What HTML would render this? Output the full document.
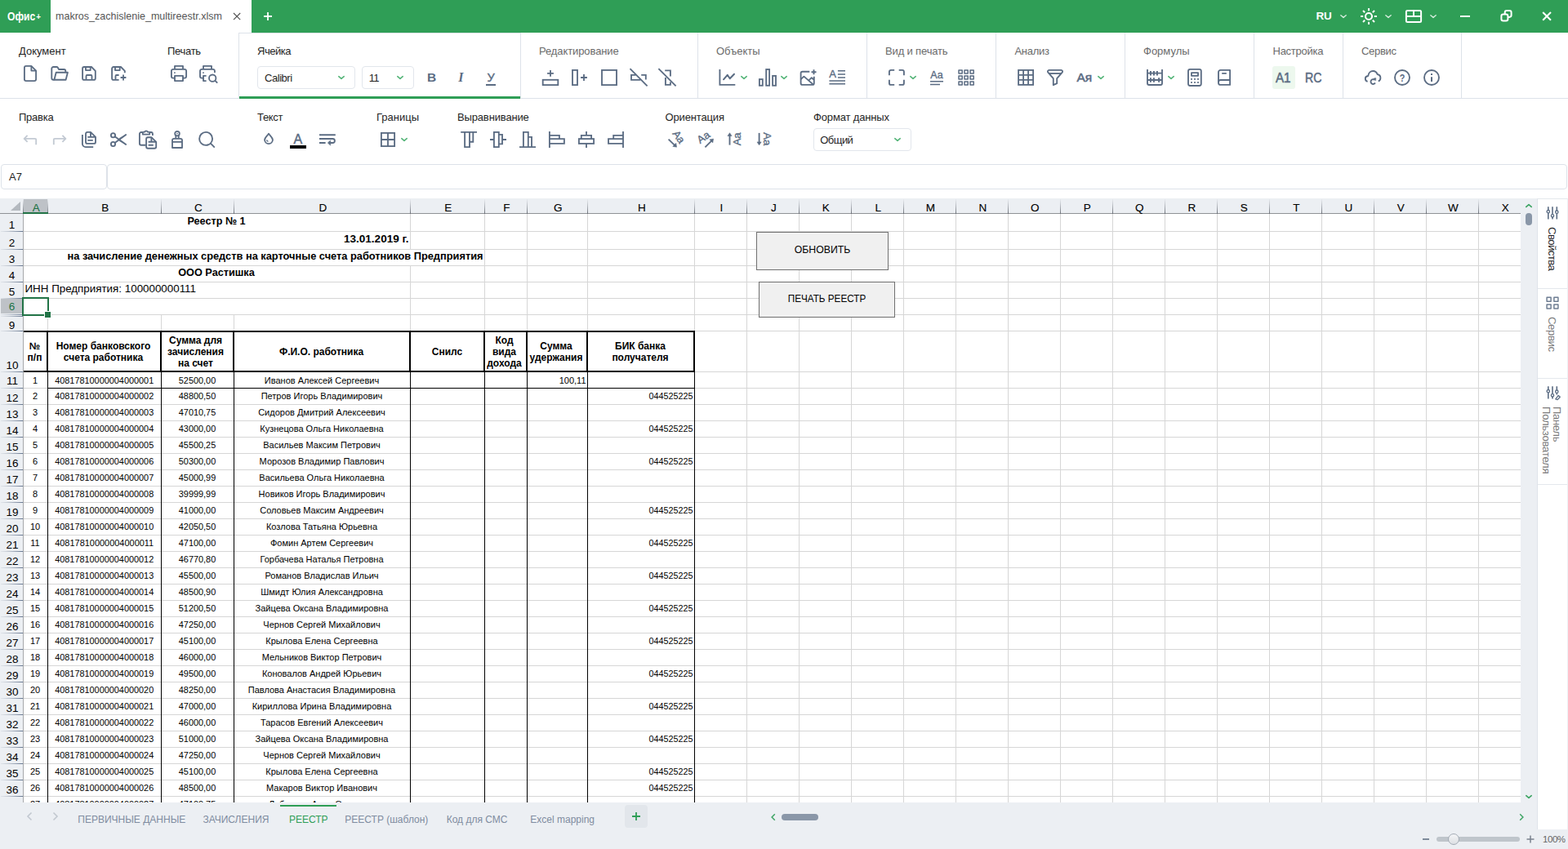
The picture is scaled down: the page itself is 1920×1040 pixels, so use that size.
<!DOCTYPE html>
<html lang="ru"><head><meta charset="utf-8"><title>makros_zachislenie_multireestr.xlsm</title>
<style>
html,body{margin:0;padding:0;}
body{width:1920px;height:1040px;overflow:hidden;background:#fff;font-family:"Liberation Sans",sans-serif;position:relative;color:#1f1f1f;}
.abs{position:absolute;}
#titlebar{position:absolute;left:0;top:0;width:1920px;height:40px;background:#2F9E56;}
#doctab{position:absolute;left:62px;top:0;width:246px;height:40px;background:#fff;}
.t{position:absolute;white-space:nowrap;line-height:16px;}
#ribbon{position:absolute;left:0;top:40px;width:1920px;height:160px;background:#fff;}
.lbl{position:absolute;white-space:nowrap;font-size:13px;line-height:16px;color:#1f1f1f;}
.lbl.g{color:#6b6b6b;}
.vdiv{position:absolute;top:40px;width:1px;height:80px;background:#DDE2E9;}
.ico{position:absolute;width:24px;height:24px;overflow:visible;fill:none;stroke:#5B6C83;stroke-width:1.85;stroke-linecap:butt;stroke-linejoin:round;}
.chev{position:absolute;width:10px;height:6px;overflow:visible;fill:none;stroke:#58B67B;stroke-width:1.7;stroke-linecap:round;stroke-linejoin:round;}
.combo{position:absolute;box-sizing:border-box;border:1px solid #E2E6EC;border-radius:4px;background:#fff;}
.btxt{position:absolute;white-space:nowrap;color:#5B6C83;font-weight:bold;line-height:20px;}
#formulabar{position:absolute;left:0;top:200px;width:1920px;height:43px;background:#fff;}
#sheet{position:absolute;left:0;top:243px;width:1862px;height:740px;background:#fff;overflow:hidden;}
#vscroll{position:absolute;left:1862px;top:243px;width:21px;height:740px;background:#ECEFF3;}
#side{position:absolute;left:1882px;top:243px;width:38px;height:773px;background:#fff;box-sizing:border-box;border-left:1px solid #DFE3EA;border-right:1px solid #EDF0F4;border-top:1px solid #E4E8ED;}
#tabs{position:absolute;left:0;top:983px;width:1882px;height:33px;background:#ECEFF3;}
#status{position:absolute;left:0;top:1016px;width:1920px;height:24px;background:#ECEFF3;}
.tab{position:absolute;top:14px;white-space:nowrap;font-size:12px;line-height:14px;color:#7F8CA0;}
svg text{font-family:"Liberation Sans",sans-serif;}
</style></head><body>

<div id="titlebar">
<div class="t" style="left:9px;top:12.25px;font-size:14.3px;line-height:16px;color:#fff;font-weight:bold;transform:scaleX(0.85);transform-origin:0 0;">Офис<span style="font-size:11.5px;position:relative;top:-0.9px;margin-left:1.2px">+</span></div>
<div id="doctab"></div>
<div class="t" style="left:68.3px;top:12.29px;font-size:13.6px;line-height:16px;color:#555;transform:scaleX(0.921);transform-origin:0 0;">makros_zachislenie_multireestr.xlsm</div>
<svg class="abs" style="left:284px;top:14px" width="12" height="12" viewBox="0 0 12 12"><path d="M2 2 L10.2 10.2 M10.2 2 L2 10.2" stroke="#555" stroke-width="1.2" fill="none"/></svg>
<svg class="abs" style="left:322px;top:14px" width="12" height="12" viewBox="0 0 12 12"><path d="M6 1 V11 M1 6 H11" stroke="#fff" stroke-width="1.8" fill="none"/></svg>
<div class="t" style="left:1611.5px;top:11.82px;font-size:13.5px;line-height:16px;color:#fff;font-weight:bold;letter-spacing:-0.3px;">RU</div>
<svg class="chev" style="left:1640px;top:17px;stroke:#D2EBDA;stroke-width:1.4;" viewBox="0 0 10 6"><path d="M1.8 1.7 L5 4.4 L8.2 1.7"/></svg>
<svg class="abs" style="left:1664px;top:8px;overflow:visible" width="24" height="24" viewBox="0 0 24 24" fill="none" stroke="#fff" stroke-width="1.7" stroke-linecap="round"><circle cx="12" cy="12" r="4" stroke-width="2.1"/><path stroke-width="2" stroke-linecap="butt" d="M12 2.1V5.2 M12 18.8V21.9 M2.1 12H5.2 M18.8 12H21.9 M5 5L7.19 7.19 M16.81 16.81L19 19 M5 19L7.19 16.81 M16.81 7.19L19 5"/></svg>
<svg class="chev" style="left:1695px;top:17px;stroke:#D2EBDA;stroke-width:1.4;" viewBox="0 0 10 6"><path d="M1.8 1.7 L5 4.4 L8.2 1.7"/></svg>
<svg class="abs" style="left:1719px;top:8px;overflow:visible" width="24" height="24" viewBox="0 0 24 24" fill="none" stroke="#fff" stroke-width="1.7" stroke-linejoin="round"><rect x="2.9" y="4.9" width="18.2" height="14.2" rx="1.5" stroke-width="2"/><path stroke-width="2" d="M2.9 12.1H21.1 M12 4.9V12.1"/></svg>
<svg class="chev" style="left:1750px;top:17px;stroke:#D2EBDA;stroke-width:1.4;" viewBox="0 0 10 6"><path d="M1.8 1.7 L5 4.4 L8.2 1.7"/></svg>
<div class="abs" style="left:1788px;top:18.7px;width:12.3px;height:2.4px;background:#fff"></div>
<svg class="abs" style="left:1832px;top:8px;overflow:visible" width="24" height="24" viewBox="0 0 24 24" fill="none" stroke="#fff" stroke-width="1.7" stroke-linejoin="round"><rect x="6.4" y="9.5" width="8" height="8" rx="2.3" stroke-width="2"/><path stroke-width="2" d="M10.7 9.5V7.4a2.3 2.3 0 0 1 2.3-2.3H16.3a2.3 2.3 0 0 1 2.3 2.3V10.6a2.3 2.3 0 0 1-2.3 2.3H14.4"/></svg>
<svg class="abs" style="left:1888px;top:14px" width="12" height="12" viewBox="0 0 12 12"><path d="M1.2 1 L11 10.8 M11 1 L1.2 10.8" stroke="#fff" stroke-width="2.1" fill="none"/></svg>
</div>
<div id="ribbon">
<div class="abs" style="left:0;top:80px;width:1920px;height:1px;background:#DDE2E9"></div>
<div class="abs" style="left:292px;top:0;width:346px;height:81px;box-sizing:border-box;border:1px solid #DDE2E9;border-bottom:none;background:#fff"></div>
<div class="abs" style="left:293px;top:78px;width:344px;height:3px;background:#2F9E56"></div>
<div class="abs" style="left:854px;top:0;width:1px;height:80px;background:#DDE2E9"></div>
<div class="abs" style="left:1061px;top:0;width:1px;height:80px;background:#DDE2E9"></div>
<div class="abs" style="left:1219px;top:0;width:1px;height:80px;background:#DDE2E9"></div>
<div class="abs" style="left:1377px;top:0;width:1px;height:80px;background:#DDE2E9"></div>
<div class="abs" style="left:1535px;top:0;width:1px;height:80px;background:#DDE2E9"></div>
<div class="abs" style="left:1644px;top:0;width:1px;height:80px;background:#DDE2E9"></div>
<div class="abs" style="left:1789px;top:0;width:1px;height:80px;background:#DDE2E9"></div>
<div class="t" style="left:23px;top:14.80px;font-size:13px;line-height:16px;color:#1f1f1f;">Документ</div>
<svg class="ico" style="left:25px;top:38px;" viewBox="0 0 24 24"><path d="M13.4 2.9H7a2.1 2.1 0 0 0-2.1 2.1V19a2.1 2.1 0 0 0 2.1 2.1H17a2.1 2.1 0 0 0 2.1-2.1V8.6Z"/><path d="M13.4 2.9V8.6H19.1"/></svg>
<svg class="ico" style="left:61px;top:38px;" viewBox="0 0 24 24"><path d="M5.6 19.7H4.3a2 2 0 0 1-2-2V6a2 2 0 0 1 2-2H8.4a1.6 1.6 0 0 1 1.4.8L11 7H17.3a2 2 0 0 1 2 2V10.7"/><path d="M7.7 10.7H21.9L19.6 19.7H5.4Z"/></svg>
<svg class="ico" style="left:97px;top:38px;" viewBox="0 0 24 24"><path d="M6 4H15L19.8 8.8V18a1.9 1.9 0 0 1-1.9 1.9H6A1.9 1.9 0 0 1 4.1 18V5.9A1.9 1.9 0 0 1 6 4Z"/><path d="M8 4V8.1H13.7V4 M8.5 19.9V15.2a1.2 1.2 0 0 1 1.2-1.2H14.3a1.2 1.2 0 0 1 1.2 1.2V19.9"/></svg>
<svg class="ico" style="left:133px;top:38px;" viewBox="0 0 24 24"><path d="M19.8 11.2V8.8L15 4H6A1.9 1.9 0 0 0 4.1 5.9V18A1.9 1.9 0 0 0 6 19.9H12.6"/><path d="M8 4V8.1H13.7V4 M8.5 19.9V15.2a1.2 1.2 0 0 1 1.2-1.2H12.6 M18 13.6V20.4 M14.6 17H21.4"/></svg>
<div class="t" style="left:205px;top:14.80px;font-size:13px;line-height:16px;color:#1f1f1f;letter-spacing:-0.3px;">Печать</div>
<svg class="ico" style="left:207px;top:38px;" viewBox="0 0 24 24"><path d="M7 6.8V2.9H17V6.8"/><path d="M7 17.6H5a2.1 2.1 0 0 1-2.1-2.1V8.9A2.1 2.1 0 0 1 5 6.8H19a2.1 2.1 0 0 1 2.1 2.1V15.5A2.1 2.1 0 0 1 19 17.6H17"/><rect x="7" y="14.9" width="10" height="6.2"/><rect x="6.1" y="10.3" width="1.6" height="1.6" fill="#5B6C83" stroke="none"/></svg>
<svg class="ico" style="left:243px;top:38px;" viewBox="0 0 24 24"><path d="M6 6.8V2.9H16V6.8"/><path d="M6 17.6H4.1A2.1 2.1 0 0 1 2 15.5V8.9A2.1 2.1 0 0 1 4.1 6.8H17.8a2.1 2.1 0 0 1 2.1 2.1V11"/><path d="M9.6 14.9H6V21.1H9.6"/><circle cx="17.2" cy="17.7" r="4.2"/><path d="M20.2 20.7L23.2 23.7"/><rect x="5.2" y="10.3" width="1.6" height="1.6" fill="#5B6C83" stroke="none"/></svg>
<div class="t" style="left:315px;top:14.80px;font-size:13px;line-height:16px;color:#1f1f1f;letter-spacing:-0.5px;">Ячейка</div>
<div class="combo" style="left:315px;top:41px;width:120px;height:28px"></div>
<div class="t" style="left:324px;top:47.60px;font-size:13px;line-height:16px;letter-spacing:-0.45px;">Calibri</div>
<svg class="chev" style="left:413px;top:51.5px;" viewBox="0 0 10 6"><path d="M1.8 1.7 L5 4.4 L8.2 1.7"/></svg>
<div class="combo" style="left:443px;top:41px;width:64px;height:28px"></div>
<div class="t" style="left:451.7px;top:47.60px;font-size:13px;line-height:16px;letter-spacing:-0.6px;">11</div>
<svg class="chev" style="left:485px;top:51.5px;" viewBox="0 0 10 6"><path d="M1.8 1.7 L5 4.4 L8.2 1.7"/></svg>
<div class="t" style="left:523px;top:47.03px;font-size:15.5px;line-height:16px;color:#5B6C83;font-weight:bold;">B</div>
<div class="t" style="left:561.2px;top:46.86px;font-size:16px;line-height:16px;color:#5B6C83;font-weight:bold;font-style:italic;font-family:'Liberation Serif',serif;">I</div>
<div class="t" style="left:596.5px;top:47.18px;font-size:14.5px;line-height:16px;color:#5B6C83;-webkit-text-stroke:0.4px #5B6C83;">У</div>
<div class="abs" style="left:595px;top:63px;width:12px;height:1.5px;background:#5B6C83"></div>
<div class="t" style="left:660px;top:14.80px;font-size:13px;line-height:16px;color:#6b6b6b;letter-spacing:-0.1px;">Редактирование</div>
<svg class="ico" style="left:662px;top:43px;" viewBox="0 0 24 24"><rect stroke-linejoin="miter" x="2.7" y="14.8" width="18.6" height="6.3"/><path d="M12 3V10.8 M8.1 6.9H15.9"/></svg>
<svg class="ico" style="left:698px;top:43px;" viewBox="0 0 24 24"><rect stroke-linejoin="miter" x="3" y="2.9" width="6" height="18.2"/><path d="M17 8.1V15.9 M13.1 12H20.9"/></svg>
<svg class="ico" style="left:734px;top:43px;" viewBox="0 0 24 24"><rect stroke-linejoin="miter" x="3" y="2.9" width="18" height="18.2"/></svg>
<svg class="ico" style="left:770px;top:43px;" viewBox="0 0 24 24"><path d="M1.5 1.2L22.6 22.4"/><path stroke-linejoin="miter" d="M8.6 8.8H3V14.8H14.4 M15.2 8.8H20.8V14.6"/></svg>
<svg class="ico" style="left:805px;top:43px;" viewBox="0 0 24 24"><path d="M1.4 1.2L22.6 22.4"/><path stroke-linejoin="miter" d="M9.2 3.4H15.9V10.4 M9.9 12V20.9H15.9V17.6"/></svg>
<div class="t" style="left:877px;top:14.80px;font-size:13px;line-height:16px;color:#6b6b6b;">Объекты</div>
<svg class="ico" style="left:878px;top:43px;" viewBox="0 0 24 24"><path stroke-linejoin="miter" d="M3.4 2V20.9H22.3"/><path d="M8 14.3L12.7 8.8L15.7 13.3L21 7.8" stroke-linecap="round" stroke-width="2"/></svg>
<svg class="chev" style="left:906px;top:51.9px;" viewBox="0 0 10 6"><path d="M1.8 1.7 L5 4.4 L8.2 1.7"/></svg>
<svg class="ico" style="left:928px;top:43px;" viewBox="0 0 24 24"><rect stroke-linejoin="miter" x="1.9" y="14.1" width="3.9" height="7.7"/><rect stroke-linejoin="miter" x="10.2" y="2" width="3.9" height="19.8"/><rect stroke-linejoin="miter" x="18.1" y="9.9" width="3.9" height="11.9"/></svg>
<svg class="chev" style="left:955px;top:51.9px;" viewBox="0 0 10 6"><path d="M1.8 1.7 L5 4.4 L8.2 1.7"/></svg>
<svg class="ico" style="left:976.5px;top:43px;" viewBox="0 0 24 24"><path d="M14.3 4.7H5.6a2 2 0 0 0-2 2V18.9a2 2 0 0 0 2 2H17.8a2 2 0 0 0 2-2V10.7"/><path d="M3.6 14.2L7.4 10.6L18.6 20.4 M13.2 15.6L16.8 12.2L19.8 14.8"/><path d="M19.5 2.2V8.2 M16.5 5.2H22.5"/></svg>
<svg class="ico" style="left:1013px;top:43px;" viewBox="0 0 24 24"><text x="6.7" y="12.4" font-size="13" font-weight="normal" text-anchor="middle" fill="#5B6C83" stroke="#5B6C83" stroke-width="0.35" >A</text><path d="M12.9 3.8H22 M12.9 7.9H22 M12.9 11.9H22 M2.4 15.9H22 M2.4 19.8H22" stroke-width="1.5"/></svg>
<div class="t" style="left:1084px;top:14.80px;font-size:13px;line-height:16px;color:#6b6b6b;letter-spacing:-0.15px;">Вид и печать</div>
<svg class="ico" style="left:1086px;top:43px;" viewBox="0 0 24 24"><path d="M9.2 2.9H4.9a2 2 0 0 0-2 2V9.2 M14.7 2.9H18.9a2 2 0 0 1 2 2V9.2 M2.9 14.7V18.9a2 2 0 0 0 2 2H9.2 M20.9 14.7V18.9a2 2 0 0 1-2 2H14.7"/></svg>
<svg class="chev" style="left:1113px;top:51.6px;" viewBox="0 0 10 6"><path d="M1.8 1.7 L5 4.4 L8.2 1.7"/></svg>
<svg class="ico" style="left:1135px;top:43px;" viewBox="0 0 24 24"><text x="12" y="12.7" font-size="12.5" font-weight="normal" text-anchor="middle" fill="#5B6C83" stroke="#5B6C83" stroke-width="0.35" >Aa</text><path d="M4 16.7H20 M4 20.6H16" stroke-width="1.5"/></svg>
<svg class="ico" style="left:1171px;top:43px;" viewBox="0 0 24 24"><rect x="3" y="2.9" width="4.2" height="4.2" stroke-width="1.5"/><rect x="3" y="9.9" width="4.2" height="4.2" stroke-width="1.5"/><rect x="3" y="16.9" width="4.2" height="4.2" stroke-width="1.5"/><rect x="10" y="2.9" width="4.2" height="4.2" stroke-width="1.5"/><rect x="10" y="9.9" width="4.2" height="4.2" stroke-width="1.5"/><rect x="10" y="16.9" width="4.2" height="4.2" stroke-width="1.5"/><rect x="17" y="2.9" width="4.2" height="4.2" stroke-width="1.5"/><rect x="17" y="9.9" width="4.2" height="4.2" stroke-width="1.5"/><rect x="17" y="16.9" width="4.2" height="4.2" stroke-width="1.5"/></svg>
<div class="t" style="left:1242.5px;top:14.80px;font-size:13px;line-height:16px;color:#6b6b6b;letter-spacing:-0.3px;">Анализ</div>
<svg class="ico" style="left:1244px;top:43px;" viewBox="0 0 24 24"><rect stroke-linejoin="miter" x="3.1" y="2.9" width="18" height="18"/><path d="M9.1 2.9V20.9 M15.1 2.9V20.9 M3.1 8.9H21.1 M3.1 14.9H21.1"/></svg>
<svg class="ico" style="left:1280px;top:43px;" viewBox="0 0 24 24"><path d="M4.6 2.9H19.4a1.7 1.7 0 0 1 1.3 2.8L14.2 13.2V19.2L9.8 21.2V13.2L3.3 5.7A1.7 1.7 0 0 1 4.6 2.9Z"/><path d="M4.2 7H19.8"/></svg>
<div class="t" style="left:1318.4px;top:47.03px;font-size:15.5px;line-height:16px;color:#5B6C83;transform:scaleX(1.0);transform-origin:0 0;-webkit-text-stroke:0.55px #5B6C83;">Ая</div>
<svg class="chev" style="left:1343px;top:51.6px;" viewBox="0 0 10 6"><path d="M1.8 1.7 L5 4.4 L8.2 1.7"/></svg>
<div class="t" style="left:1400px;top:14.80px;font-size:13px;line-height:16px;color:#6b6b6b;">Формулы</div>
<svg class="ico" style="left:1402px;top:43px;" viewBox="0 0 24 24"><path d="M3 2V19a2 2 0 0 0 2 2H19a2 2 0 0 0 2-2V2"/><path d="M3 6.6H21 M3 15H21"/><path d="M6.9 3.9V9.4 M10.9 3.9V9.4 M14.9 3.9V9.4 M6.9 12.3V17.8 M10.9 12.3V17.8 M17.1 12.3V17.8" stroke-width="2"/></svg>
<svg class="chev" style="left:1429px;top:51.6px;" viewBox="0 0 10 6"><path d="M1.8 1.7 L5 4.4 L8.2 1.7"/></svg>
<svg class="ico" style="left:1451px;top:43px;" viewBox="0 0 24 24"><rect x="4" y="1.9" width="15.8" height="20.1" rx="2.2"/><rect x="8" y="6.1" width="8" height="3.7"/><rect x="7.1" y="13.0" width="1.8" height="1.8" fill="#5B6C83" stroke="none"/><rect x="7.1" y="17.1" width="1.8" height="1.8" fill="#5B6C83" stroke="none"/><rect x="11.1" y="13.0" width="1.8" height="1.8" fill="#5B6C83" stroke="none"/><rect x="11.1" y="17.1" width="1.8" height="1.8" fill="#5B6C83" stroke="none"/><rect x="15.1" y="13.0" width="1.8" height="1.8" fill="#5B6C83" stroke="none"/><rect x="15.1" y="17.1" width="1.8" height="1.8" fill="#5B6C83" stroke="none"/></svg>
<svg class="ico" style="left:1487px;top:43px;" viewBox="0 0 24 24"><path d="M19.1 2.9H7.5A2.5 2.5 0 0 0 5 5.4V18.4a2.5 2.5 0 0 0 2.5 2.5H19.1Z"/><path d="M19.1 15H7.5A2.5 2.5 0 0 0 5 17.5 M9.2 6.8H14.8"/></svg>
<div class="t" style="left:1558.5px;top:14.80px;font-size:13px;line-height:16px;color:#6b6b6b;letter-spacing:-0.25px;">Настройка</div>
<div class="abs" style="left:1558px;top:41px;width:28px;height:28px;border-radius:3px;background:#EDF8EE"></div>
<div class="t" style="left:1562.3px;top:47.28px;font-size:16.5px;line-height:16px;color:#5B6C83;transform:scaleX(0.92);transform-origin:0 0;-webkit-text-stroke:0.55px #5B6C83;">A1</div>
<div class="t" style="left:1598px;top:47.28px;font-size:16.5px;line-height:16px;color:#5B6C83;transform:scaleX(0.86);transform-origin:0 0;-webkit-text-stroke:0.55px #5B6C83;">RC</div>
<div class="t" style="left:1667px;top:14.80px;font-size:13px;line-height:16px;color:#6b6b6b;letter-spacing:-0.3px;">Сервис</div>
<svg class="ico" style="left:1669px;top:43px;" viewBox="0 0 24 24"><path d="M5.6 16.8C3.6 16.3 2.8 14.7 2.8 13.2C2.8 11.4 4.2 10.2 6.3 10C6.6 6.5 9.2 4 12.3 4C15 4 16.8 5.8 17.6 8C19.8 8.4 21.4 10.2 21.4 12.4C21.4 14.4 20.4 15.8 18.7 16.5"/><path d="M14.5 15.1A2.9 2.9 0 1 0 14.9 18.5"/><path d="M12.9 13.1L15.8 12.6L15.6 15.9Z" fill="#5B6C83" stroke-width="0.5"/></svg>
<svg class="ico" style="left:1705px;top:43px;" viewBox="0 0 24 24"><circle cx="12" cy="12" r="9"/><text x="0" y="0" font-size="13.5" font-weight="bold" text-anchor="middle" fill="#5B6C83" stroke="#5B6C83" stroke-width="0" transform="translate(12 16.9) scale(0.8 1)" >?</text></svg>
<svg class="ico" style="left:1741px;top:43px;" viewBox="0 0 24 24"><circle cx="12" cy="12" r="9"/><path d="M12 11.3V17" stroke-width="2"/><rect x="11" y="7.1" width="2" height="1.9" fill="#5B6C83" stroke="none"/></svg>
<div class="t" style="left:23px;top:95.80px;font-size:13px;line-height:16px;color:#1f1f1f;letter-spacing:-0.25px;">Правка</div>
<svg class="ico" style="left:25px;top:119px;stroke:#C3CAD3;" viewBox="0 0 24 24"><path d="M8.6 6.9L4.6 10.9L8.6 14.9 M4.9 10.9H18a1.2 1.2 0 0 1 1.2 1.2V18.2"/></svg>
<svg class="ico" style="left:61px;top:119px;stroke:#C3CAD3;" viewBox="0 0 24 24"><path d="M15.4 6.9L19.4 10.9L15.4 14.9 M19.1 10.9H6a1.2 1.2 0 0 0-1.2 1.2V18.2"/></svg>
<svg class="ico" style="left:97px;top:119px;" viewBox="0 0 24 24"><path d="M14 2.9H10a2 2 0 0 0-2 2V14.9a2 2 0 0 0 2 2H18a2 2 0 0 0 2-2V8.8Z"/><path d="M14 2.9V8.8 M10.3 8.8H20 M10.3 12.8H16.8"/><path d="M3.9 6V17.1a4 4 0 0 0 4 4H17.2"/></svg>
<svg class="ico" style="left:133px;top:119px;" viewBox="0 0 24 24"><circle cx="5.5" cy="6.7" r="2.6"/><circle cx="5.5" cy="17.5" r="2.6"/><path d="M7.6 8.3L21.6 18.3 M7.6 15.9L21.6 5.7"/><path d="M11.2 10.9L21.9 18.6L13.3 13.8Z M11.2 13.1L21.9 5.4L13.3 10.2Z" fill="#5B6C83" stroke-width="0.4"/></svg>
<svg class="ico" style="left:169px;top:119px;" viewBox="0 0 24 24"><path d="M9.5 18.7H3.9a2 2 0 0 1-2-2V5a2 2 0 0 1 2-2H5.8 M14.2 3H15.9a2 2 0 0 1 2 2V7"/><path d="M5.8 5.6V3.6a1 1 0 0 1 1-1H8.2a1.9 1.9 0 0 1 3.6 0H13.2a1 1 0 0 1 1 1V5.6Z"/><path d="M16.4 9.2H12.1a2 2 0 0 0-2 2V20.7a2 2 0 0 0 2 2H20.2a2 2 0 0 0 2-2V14.8Z"/><path d="M16.4 9.2V14.7 M12.6 14.7H22.2 M12.6 18.7H18.8"/></svg>
<svg class="ico" style="left:205px;top:119px;" viewBox="0 0 24 24"><circle cx="12" cy="4.6" r="2.8"/><circle cx="12" cy="4.6" r="0.8" fill="#5B6C83" stroke="none"/><path d="M10.3 7V10.8 M13.7 7V10.8"/><path d="M6 22V12.8a2 2 0 0 1 2-2H16a2 2 0 0 1 2 2V22Z M6 14.8H18"/></svg>
<svg class="ico" style="left:241px;top:119px;" viewBox="0 0 24 24"><circle cx="11.1" cy="10.9" r="8"/><path d="M16.9 16.7L21.8 21.6"/></svg>
<div class="t" style="left:315px;top:95.80px;font-size:13px;line-height:16px;color:#1f1f1f;letter-spacing:-0.3px;">Текст</div>
<svg class="ico" style="left:317px;top:118px;" viewBox="0 0 24 24"><path d="M12 5.8C10.2 8.3 7.1 10.4 7.1 13.2a4.9 4.9 0 0 0 9.8 0C16.9 10.4 13.8 8.3 12 5.8Z"/><path d="M9.6 13.4a2.3 2.3 0 0 0 1.9 2" stroke-width="1.4"/></svg>
<div class="t" style="left:359.6px;top:123.46px;font-size:16px;line-height:16px;color:#5B6C83;-webkit-text-stroke:0.45px #5B6C83;">A</div>
<div class="abs" style="left:355px;top:138px;width:20px;height:4px;background:#000"></div>
<svg class="ico" style="left:389px;top:119px;" viewBox="0 0 24 24"><path d="M2 6.2H21.8 M2 11H18.4a2.5 2.5 0 0 1 0 5H14 M2 16H9.6"/><path d="M15.6 12.9L12.3 16L15.6 19.1Z" fill="#5B6C83" stroke-width="0.6"/></svg>
<div class="t" style="left:461px;top:95.80px;font-size:13px;line-height:16px;color:#1f1f1f;">Границы</div>
<svg class="ico" style="left:463px;top:119px;" viewBox="0 0 24 24"><rect stroke-linejoin="miter" x="3.9" y="3.9" width="16.2" height="16.2"/><path d="M12 3.9V20.1 M3.9 12H20.1"/></svg>
<svg class="chev" style="left:490px;top:127.6px;" viewBox="0 0 10 6"><path d="M1.8 1.7 L5 4.4 L8.2 1.7"/></svg>
<div class="t" style="left:560px;top:95.80px;font-size:13px;line-height:16px;color:#1f1f1f;letter-spacing:-0.15px;">Выравнивание</div>
<svg class="ico" style="left:562px;top:119px;" viewBox="0 0 24 24"><path stroke-linejoin="miter" d="M2.2 2.9H22 M7.1 2.9V21.1H13V2.9 M13 14.7H17.3V2.9"/></svg>
<svg class="ico" style="left:598px;top:119px;" viewBox="0 0 24 24"><path stroke-linejoin="miter" d="M2 12H6.9 M17 12H22"/><rect stroke-linejoin="miter" x="6.9" y="2.9" width="5.9" height="18.2"/><path stroke-linejoin="miter" d="M12.8 5.8H17V17.4H12.8"/></svg>
<svg class="ico" style="left:634px;top:119px;" viewBox="0 0 24 24"><path stroke-linejoin="miter" d="M2 21.1H22 M6.9 21.1V2.9H12.8V21.1 M12.8 8.8H17V21.1"/></svg>
<svg class="ico" style="left:670px;top:119px;" viewBox="0 0 24 24"><path stroke-linejoin="miter" d="M2.9 2V22 M2.9 6.9H14.9V11.1 M2.9 11.1H20.9V16.9H2.9"/></svg>
<svg class="ico" style="left:706px;top:119px;" viewBox="0 0 24 24"><path stroke-linejoin="miter" d="M12 2V6.9 M12 16.9V22 M5.8 11.1V6.9H18.1V11.1"/><rect stroke-linejoin="miter" x="2.9" y="11.1" width="18.2" height="5.8"/></svg>
<svg class="ico" style="left:742px;top:119px;" viewBox="0 0 24 24"><path stroke-linejoin="miter" d="M21 2V22 M21 6.9H9.2V11.1 M21 11.1H3V16.9H21"/></svg>
<div class="t" style="left:814.5px;top:95.80px;font-size:13px;line-height:16px;color:#1f1f1f;letter-spacing:-0.15px;">Ориентация</div>
<svg class="ico" style="left:815px;top:119px;" viewBox="0 0 24 24"><text x="0" y="0" font-size="13" font-weight="normal" text-anchor="middle" fill="#5B6C83" stroke="#5B6C83" stroke-width="0.35" transform="translate(12.6 11.2) rotate(55)" >Aa</text><path d="M3.6 11.6L11.6 19.3"/><path d="M13.6 21.2L8.8 20.4L12.8 16.3Z" fill="#5B6C83" stroke-width="0.5"/></svg>
<svg class="ico" style="left:851px;top:119px;" viewBox="0 0 24 24"><text x="0" y="0" font-size="13" font-weight="normal" text-anchor="middle" fill="#5B6C83" stroke="#5B6C83" stroke-width="0.35" transform="translate(12.8 12.6) rotate(-35)" >Aa</text><path d="M12.4 21.4L20.4 13.3"/><path d="M22.6 11.1L21.8 15.9L17.8 11.9Z" fill="#5B6C83" stroke-width="0.5"/></svg>
<svg class="ico" style="left:887px;top:119px;" viewBox="0 0 24 24"><text x="0" y="0" font-size="13" font-weight="normal" text-anchor="middle" fill="#5B6C83" stroke="#5B6C83" stroke-width="0.35" transform="translate(20.1 11.4) rotate(-90)" >Aa</text><path d="M6.5 18.6V6"/><path d="M6.5 3.7L9.1 7.6H3.9Z" fill="#5B6C83" stroke-width="0.5"/></svg>
<svg class="ico" style="left:923px;top:119px;" viewBox="0 0 24 24"><text x="0" y="0" font-size="13" font-weight="normal" text-anchor="middle" fill="#5B6C83" stroke="#5B6C83" stroke-width="0.35" transform="translate(12.2 11.2) rotate(90)" >Aa</text><path d="M6.6 3.9V16.5"/><path d="M6.6 18.8L9.2 14.9H4Z" fill="#5B6C83" stroke-width="0.5"/></svg>
<div class="t" style="left:996px;top:95.80px;font-size:13px;line-height:16px;color:#1f1f1f;letter-spacing:-0.15px;">Формат данных</div>
<div class="combo" style="left:996px;top:117px;width:120px;height:28px"></div>
<div class="t" style="left:1004.3px;top:123.80px;font-size:13px;line-height:16px;letter-spacing:-0.55px;">Общий</div>
<svg class="chev" style="left:1094px;top:127.5px;" viewBox="0 0 10 6"><path d="M1.8 1.7 L5 4.4 L8.2 1.7"/></svg>
</div>
<div id="formulabar">
<div class="combo" style="left:1px;top:1px;width:130px;height:31px;border-color:#DDE2E9"></div>
<div class="combo" style="left:131px;top:1px;width:1788px;height:31px;border-color:#DDE2E9"></div>
<div class="t" style="left:11px;top:8.80px;font-size:13px;line-height:16px;">A7</div>
</div>
<div id="sheet">
<svg width="1862" height="740" viewBox="0 243 1862 740" style="position:absolute;left:0;top:0;display:block" shape-rendering="crispEdges">
<defs><linearGradient id="hs" x1="0" y1="0" x2="0" y2="1"><stop offset="0" stop-color="#8b9097" stop-opacity="0.05"/><stop offset="1" stop-color="#686d75"/></linearGradient><linearGradient id="rs" x1="0" y1="0" x2="1" y2="0"><stop offset="0" stop-color="#9aa3b0" stop-opacity="0.15"/><stop offset="1" stop-color="#62738d"/></linearGradient></defs>
<rect x="0" y="243" width="1862" height="19" fill="#ECEFF3"/>
<rect x="0" y="262" width="28" height="730" fill="#ECEFF3"/>
<rect x="29" y="283" width="1833" height="1" fill="#D6D6D6"/>
<rect x="29" y="305" width="1833" height="1" fill="#D6D6D6"/>
<rect x="29" y="325" width="1833" height="1" fill="#D6D6D6"/>
<rect x="29" y="345" width="1833" height="1" fill="#D6D6D6"/>
<rect x="29" y="365" width="1833" height="1" fill="#D6D6D6"/>
<rect x="29" y="385" width="1833" height="1" fill="#D6D6D6"/>
<rect x="29" y="405" width="1833" height="1" fill="#D6D6D6"/>
<rect x="29" y="455" width="1833" height="1" fill="#D6D6D6"/>
<rect x="29" y="475" width="1833" height="1" fill="#D6D6D6"/>
<rect x="29" y="495" width="1833" height="1" fill="#D6D6D6"/>
<rect x="29" y="515" width="1833" height="1" fill="#D6D6D6"/>
<rect x="29" y="535" width="1833" height="1" fill="#D6D6D6"/>
<rect x="29" y="555" width="1833" height="1" fill="#D6D6D6"/>
<rect x="29" y="575" width="1833" height="1" fill="#D6D6D6"/>
<rect x="29" y="595" width="1833" height="1" fill="#D6D6D6"/>
<rect x="29" y="615" width="1833" height="1" fill="#D6D6D6"/>
<rect x="29" y="635" width="1833" height="1" fill="#D6D6D6"/>
<rect x="29" y="655" width="1833" height="1" fill="#D6D6D6"/>
<rect x="29" y="675" width="1833" height="1" fill="#D6D6D6"/>
<rect x="29" y="695" width="1833" height="1" fill="#D6D6D6"/>
<rect x="29" y="715" width="1833" height="1" fill="#D6D6D6"/>
<rect x="29" y="735" width="1833" height="1" fill="#D6D6D6"/>
<rect x="29" y="755" width="1833" height="1" fill="#D6D6D6"/>
<rect x="29" y="775" width="1833" height="1" fill="#D6D6D6"/>
<rect x="29" y="795" width="1833" height="1" fill="#D6D6D6"/>
<rect x="29" y="815" width="1833" height="1" fill="#D6D6D6"/>
<rect x="29" y="835" width="1833" height="1" fill="#D6D6D6"/>
<rect x="29" y="855" width="1833" height="1" fill="#D6D6D6"/>
<rect x="29" y="875" width="1833" height="1" fill="#D6D6D6"/>
<rect x="29" y="895" width="1833" height="1" fill="#D6D6D6"/>
<rect x="29" y="915" width="1833" height="1" fill="#D6D6D6"/>
<rect x="29" y="935" width="1833" height="1" fill="#D6D6D6"/>
<rect x="29" y="955" width="1833" height="1" fill="#D6D6D6"/>
<rect x="29" y="975" width="1833" height="1" fill="#D6D6D6"/>
<rect x="29" y="995" width="1833" height="1" fill="#D6D6D6"/>
<rect x="58" y="385" width="1" height="598" fill="#D6D6D6"/>
<rect x="197" y="385" width="1" height="598" fill="#D6D6D6"/>
<rect x="286" y="385" width="1" height="598" fill="#D6D6D6"/>
<rect x="502" y="262" width="1" height="43" fill="#D6D6D6"/>
<rect x="502" y="325" width="1" height="658" fill="#D6D6D6"/>
<rect x="593" y="262" width="1" height="721" fill="#D6D6D6"/>
<rect x="645" y="262" width="1" height="721" fill="#D6D6D6"/>
<rect x="719" y="262" width="1" height="721" fill="#D6D6D6"/>
<rect x="850" y="262" width="1" height="721" fill="#D6D6D6"/>
<rect x="914" y="262" width="1" height="721" fill="#D6D6D6"/>
<rect x="978" y="262" width="1" height="721" fill="#D6D6D6"/>
<rect x="1042" y="262" width="1" height="721" fill="#D6D6D6"/>
<rect x="1106" y="262" width="1" height="721" fill="#D6D6D6"/>
<rect x="1170" y="262" width="1" height="721" fill="#D6D6D6"/>
<rect x="1234" y="262" width="1" height="721" fill="#D6D6D6"/>
<rect x="1298" y="262" width="1" height="721" fill="#D6D6D6"/>
<rect x="1362" y="262" width="1" height="721" fill="#D6D6D6"/>
<rect x="1426" y="262" width="1" height="721" fill="#D6D6D6"/>
<rect x="1490" y="262" width="1" height="721" fill="#D6D6D6"/>
<rect x="1554" y="262" width="1" height="721" fill="#D6D6D6"/>
<rect x="1618" y="262" width="1" height="721" fill="#D6D6D6"/>
<rect x="1682" y="262" width="1" height="721" fill="#D6D6D6"/>
<rect x="1746" y="262" width="1" height="721" fill="#D6D6D6"/>
<rect x="1810" y="262" width="1" height="721" fill="#D6D6D6"/>
<rect x="0" y="261" width="1862" height="1" fill="#8F9296"/>
<rect x="28" y="244" width="1" height="18" fill="url(#hs)"/>
<rect x="58" y="244" width="1" height="18" fill="url(#hs)"/>
<rect x="197" y="244" width="1" height="18" fill="url(#hs)"/>
<rect x="286" y="244" width="1" height="18" fill="url(#hs)"/>
<rect x="502" y="244" width="1" height="18" fill="url(#hs)"/>
<rect x="593" y="244" width="1" height="18" fill="url(#hs)"/>
<rect x="645" y="244" width="1" height="18" fill="url(#hs)"/>
<rect x="719" y="244" width="1" height="18" fill="url(#hs)"/>
<rect x="850" y="244" width="1" height="18" fill="url(#hs)"/>
<rect x="914" y="244" width="1" height="18" fill="url(#hs)"/>
<rect x="978" y="244" width="1" height="18" fill="url(#hs)"/>
<rect x="1042" y="244" width="1" height="18" fill="url(#hs)"/>
<rect x="1106" y="244" width="1" height="18" fill="url(#hs)"/>
<rect x="1170" y="244" width="1" height="18" fill="url(#hs)"/>
<rect x="1234" y="244" width="1" height="18" fill="url(#hs)"/>
<rect x="1298" y="244" width="1" height="18" fill="url(#hs)"/>
<rect x="1362" y="244" width="1" height="18" fill="url(#hs)"/>
<rect x="1426" y="244" width="1" height="18" fill="url(#hs)"/>
<rect x="1490" y="244" width="1" height="18" fill="url(#hs)"/>
<rect x="1554" y="244" width="1" height="18" fill="url(#hs)"/>
<rect x="1618" y="244" width="1" height="18" fill="url(#hs)"/>
<rect x="1682" y="244" width="1" height="18" fill="url(#hs)"/>
<rect x="1746" y="244" width="1" height="18" fill="url(#hs)"/>
<rect x="1810" y="244" width="1" height="18" fill="url(#hs)"/>
<rect x="29" y="244" width="29" height="17" fill="#BEC2C7"/>
<rect x="28" y="260" width="31" height="2" fill="#217346"/>
<text x="44.3" y="258.6" font-size="13.5" text-anchor="middle" fill="#217346" stroke="#217346" stroke-width="0.12">A</text>
<text x="128.8" y="258.6" font-size="13.5" text-anchor="middle" fill="#000" stroke="#000" stroke-width="0.12">B</text>
<text x="242.8" y="258.6" font-size="13.5" text-anchor="middle" fill="#000" stroke="#000" stroke-width="0.12">C</text>
<text x="395.3" y="258.6" font-size="13.5" text-anchor="middle" fill="#000" stroke="#000" stroke-width="0.12">D</text>
<text x="548.8" y="258.6" font-size="13.5" text-anchor="middle" fill="#000" stroke="#000" stroke-width="0.12">E</text>
<text x="620.3" y="258.6" font-size="13.5" text-anchor="middle" fill="#000" stroke="#000" stroke-width="0.12">F</text>
<text x="683.3" y="258.6" font-size="13.5" text-anchor="middle" fill="#000" stroke="#000" stroke-width="0.12">G</text>
<text x="785.8" y="258.6" font-size="13.5" text-anchor="middle" fill="#000" stroke="#000" stroke-width="0.12">H</text>
<text x="883.3" y="258.6" font-size="13.5" text-anchor="middle" fill="#000" stroke="#000" stroke-width="0.12">I</text>
<text x="947.3" y="258.6" font-size="13.5" text-anchor="middle" fill="#000" stroke="#000" stroke-width="0.12">J</text>
<text x="1011.3" y="258.6" font-size="13.5" text-anchor="middle" fill="#000" stroke="#000" stroke-width="0.12">K</text>
<text x="1075.3" y="258.6" font-size="13.5" text-anchor="middle" fill="#000" stroke="#000" stroke-width="0.12">L</text>
<text x="1139.3" y="258.6" font-size="13.5" text-anchor="middle" fill="#000" stroke="#000" stroke-width="0.12">M</text>
<text x="1203.3" y="258.6" font-size="13.5" text-anchor="middle" fill="#000" stroke="#000" stroke-width="0.12">N</text>
<text x="1267.3" y="258.6" font-size="13.5" text-anchor="middle" fill="#000" stroke="#000" stroke-width="0.12">O</text>
<text x="1331.3" y="258.6" font-size="13.5" text-anchor="middle" fill="#000" stroke="#000" stroke-width="0.12">P</text>
<text x="1395.3" y="258.6" font-size="13.5" text-anchor="middle" fill="#000" stroke="#000" stroke-width="0.12">Q</text>
<text x="1459.3" y="258.6" font-size="13.5" text-anchor="middle" fill="#000" stroke="#000" stroke-width="0.12">R</text>
<text x="1523.3" y="258.6" font-size="13.5" text-anchor="middle" fill="#000" stroke="#000" stroke-width="0.12">S</text>
<text x="1587.3" y="258.6" font-size="13.5" text-anchor="middle" fill="#000" stroke="#000" stroke-width="0.12">T</text>
<text x="1651.3" y="258.6" font-size="13.5" text-anchor="middle" fill="#000" stroke="#000" stroke-width="0.12">U</text>
<text x="1715.3" y="258.6" font-size="13.5" text-anchor="middle" fill="#000" stroke="#000" stroke-width="0.12">V</text>
<text x="1779.3" y="258.6" font-size="13.5" text-anchor="middle" fill="#000" stroke="#000" stroke-width="0.12">W</text>
<text x="1843.3" y="258.6" font-size="13.5" text-anchor="middle" fill="#000" stroke="#000" stroke-width="0.12">X</text>
<path d="M25 247 V258 H13 Z" fill="#B4B9BF" shape-rendering="geometricPrecision"/>
<rect x="28" y="262" width="1" height="730" fill="#A6A8AB"/>
<rect x="1" y="283" width="27" height="1" fill="url(#rs)"/>
<text x="14.5" y="280" font-size="13.5" text-anchor="middle" fill="#000" >1</text>
<rect x="1" y="305" width="27" height="1" fill="url(#rs)"/>
<text x="14.5" y="302" font-size="13.5" text-anchor="middle" fill="#000" >2</text>
<rect x="1" y="325" width="27" height="1" fill="url(#rs)"/>
<text x="14.5" y="322" font-size="13.5" text-anchor="middle" fill="#000" >3</text>
<rect x="1" y="345" width="27" height="1" fill="url(#rs)"/>
<text x="14.5" y="342" font-size="13.5" text-anchor="middle" fill="#000" >4</text>
<rect x="1" y="365" width="27" height="1" fill="url(#rs)"/>
<text x="14.5" y="362" font-size="13.5" text-anchor="middle" fill="#000" >5</text>
<rect x="1" y="385" width="27" height="1" fill="url(#rs)"/>
<rect x="1" y="366" width="27" height="18" fill="#BEC2C7"/>
<text x="14.5" y="380" font-size="13.5" text-anchor="middle" fill="#217346" >6</text>
<rect x="1" y="405" width="27" height="1" fill="url(#rs)"/>
<text x="14.5" y="403.2" font-size="13.5" text-anchor="middle" fill="#000" >9</text>
<rect x="1" y="455" width="27" height="1" fill="url(#rs)"/>
<text x="15" y="452" font-size="13.5" text-anchor="middle" fill="#000" >10</text>
<rect x="1" y="475" width="27" height="1" fill="url(#rs)"/>
<text x="15" y="471.2" font-size="13.5" text-anchor="middle" fill="#000" >11</text>
<rect x="1" y="495" width="27" height="1" fill="url(#rs)"/>
<text x="15" y="492" font-size="13.5" text-anchor="middle" fill="#000" >12</text>
<rect x="1" y="515" width="27" height="1" fill="url(#rs)"/>
<text x="15" y="512" font-size="13.5" text-anchor="middle" fill="#000" >13</text>
<rect x="1" y="535" width="27" height="1" fill="url(#rs)"/>
<text x="15" y="532" font-size="13.5" text-anchor="middle" fill="#000" >14</text>
<rect x="1" y="555" width="27" height="1" fill="url(#rs)"/>
<text x="15" y="552" font-size="13.5" text-anchor="middle" fill="#000" >15</text>
<rect x="1" y="575" width="27" height="1" fill="url(#rs)"/>
<text x="15" y="572" font-size="13.5" text-anchor="middle" fill="#000" >16</text>
<rect x="1" y="595" width="27" height="1" fill="url(#rs)"/>
<text x="15" y="592" font-size="13.5" text-anchor="middle" fill="#000" >17</text>
<rect x="1" y="615" width="27" height="1" fill="url(#rs)"/>
<text x="15" y="612" font-size="13.5" text-anchor="middle" fill="#000" >18</text>
<rect x="1" y="635" width="27" height="1" fill="url(#rs)"/>
<text x="15" y="632" font-size="13.5" text-anchor="middle" fill="#000" >19</text>
<rect x="1" y="655" width="27" height="1" fill="url(#rs)"/>
<text x="15" y="652" font-size="13.5" text-anchor="middle" fill="#000" >20</text>
<rect x="1" y="675" width="27" height="1" fill="url(#rs)"/>
<text x="15" y="672" font-size="13.5" text-anchor="middle" fill="#000" >21</text>
<rect x="1" y="695" width="27" height="1" fill="url(#rs)"/>
<text x="15" y="692" font-size="13.5" text-anchor="middle" fill="#000" >22</text>
<rect x="1" y="715" width="27" height="1" fill="url(#rs)"/>
<text x="15" y="712" font-size="13.5" text-anchor="middle" fill="#000" >23</text>
<rect x="1" y="735" width="27" height="1" fill="url(#rs)"/>
<text x="15" y="732" font-size="13.5" text-anchor="middle" fill="#000" >24</text>
<rect x="1" y="755" width="27" height="1" fill="url(#rs)"/>
<text x="15" y="752" font-size="13.5" text-anchor="middle" fill="#000" >25</text>
<rect x="1" y="775" width="27" height="1" fill="url(#rs)"/>
<text x="15" y="772" font-size="13.5" text-anchor="middle" fill="#000" >26</text>
<rect x="1" y="795" width="27" height="1" fill="url(#rs)"/>
<text x="15" y="792" font-size="13.5" text-anchor="middle" fill="#000" >27</text>
<rect x="1" y="815" width="27" height="1" fill="url(#rs)"/>
<text x="15" y="812" font-size="13.5" text-anchor="middle" fill="#000" >28</text>
<rect x="1" y="835" width="27" height="1" fill="url(#rs)"/>
<text x="15" y="832" font-size="13.5" text-anchor="middle" fill="#000" >29</text>
<rect x="1" y="855" width="27" height="1" fill="url(#rs)"/>
<text x="15" y="852" font-size="13.5" text-anchor="middle" fill="#000" >30</text>
<rect x="1" y="875" width="27" height="1" fill="url(#rs)"/>
<text x="15" y="872" font-size="13.5" text-anchor="middle" fill="#000" >31</text>
<rect x="1" y="895" width="27" height="1" fill="url(#rs)"/>
<text x="15" y="892" font-size="13.5" text-anchor="middle" fill="#000" >32</text>
<rect x="1" y="915" width="27" height="1" fill="url(#rs)"/>
<text x="15" y="912" font-size="13.5" text-anchor="middle" fill="#000" >33</text>
<rect x="1" y="935" width="27" height="1" fill="url(#rs)"/>
<text x="15" y="932" font-size="13.5" text-anchor="middle" fill="#000" >34</text>
<rect x="1" y="955" width="27" height="1" fill="url(#rs)"/>
<text x="15" y="952" font-size="13.5" text-anchor="middle" fill="#000" >35</text>
<rect x="1" y="975" width="27" height="1" fill="url(#rs)"/>
<text x="15" y="972" font-size="13.5" text-anchor="middle" fill="#000" >36</text>
<rect x="1" y="995" width="27" height="1" fill="url(#rs)"/>
<text x="15" y="992" font-size="13.5" text-anchor="middle" fill="#000" >37</text>
<rect x="1" y="387" width="27" height="1" fill="url(#rs)"/>
<text x="265" y="275" font-size="13" text-anchor="middle" fill="#000" font-weight="bold" textLength="71" lengthAdjust="spacingAndGlyphs" >Реестр № 1</text>
<text x="500.5" y="296.5" font-size="13" text-anchor="end" fill="#000" font-weight="bold" textLength="79.5" lengthAdjust="spacingAndGlyphs" >13.01.2019 г.</text>
<text x="337" y="317.5" font-size="13" text-anchor="middle" fill="#000" font-weight="bold" textLength="509" lengthAdjust="spacingAndGlyphs" >на зачисление денежных средств на карточные счета работников Предприятия</text>
<text x="265" y="337.5" font-size="13" text-anchor="middle" fill="#000" font-weight="bold" textLength="93.5" lengthAdjust="spacingAndGlyphs" >ООО Растишка</text>
<text x="30.5" y="357.5" font-size="13.3" text-anchor="start" fill="#000" textLength="209.5" lengthAdjust="spacingAndGlyphs" >ИНН Предприятия: 100000000111</text>
<rect x="29" y="405" width="822" height="2" fill="#000"/>
<rect x="29" y="454" width="822" height="2" fill="#000"/>
<rect x="57" y="405" width="2" height="51" fill="#000"/>
<rect x="58" y="456" width="1" height="530" fill="#000"/>
<rect x="196" y="405" width="2" height="51" fill="#000"/>
<rect x="197" y="456" width="1" height="530" fill="#000"/>
<rect x="285" y="405" width="2" height="51" fill="#000"/>
<rect x="286" y="456" width="1" height="530" fill="#000"/>
<rect x="501" y="405" width="2" height="51" fill="#000"/>
<rect x="502" y="456" width="1" height="530" fill="#000"/>
<rect x="592" y="405" width="2" height="51" fill="#000"/>
<rect x="593" y="456" width="1" height="530" fill="#000"/>
<rect x="644" y="405" width="2" height="51" fill="#000"/>
<rect x="645" y="456" width="1" height="530" fill="#000"/>
<rect x="718" y="405" width="2" height="51" fill="#000"/>
<rect x="719" y="456" width="1" height="530" fill="#000"/>
<rect x="849" y="405" width="2" height="51" fill="#000"/>
<rect x="850" y="456" width="1" height="530" fill="#000"/>
<rect x="58" y="475" width="793" height="1" fill="#000"/>
<text x="42.5" y="428" font-size="12" text-anchor="middle" fill="#000" font-weight="bold" >№</text>
<text x="42.5" y="442" font-size="12" text-anchor="middle" fill="#000" font-weight="bold" >п/п</text>
<text x="126.5" y="428" font-size="12" text-anchor="middle" fill="#000" font-weight="bold" >Номер банковского</text>
<text x="126.5" y="442" font-size="12" text-anchor="middle" fill="#000" font-weight="bold" >счета работника</text>
<text x="239.5" y="420.5" font-size="12" text-anchor="middle" fill="#000" font-weight="bold" >Сумма для</text>
<text x="239.5" y="434.5" font-size="12" text-anchor="middle" fill="#000" font-weight="bold" >зачисления</text>
<text x="239.5" y="448.5" font-size="12" text-anchor="middle" fill="#000" font-weight="bold" >на счет</text>
<text x="393.5" y="434.5" font-size="12" text-anchor="middle" fill="#000" font-weight="bold" >Ф.И.О. работника</text>
<text x="547.5" y="434.5" font-size="12" text-anchor="middle" fill="#000" font-weight="bold" >Снилс</text>
<text x="617.5" y="420.5" font-size="12" text-anchor="middle" fill="#000" font-weight="bold" >Код</text>
<text x="617.5" y="434.5" font-size="12" text-anchor="middle" fill="#000" font-weight="bold" >вида</text>
<text x="617.5" y="448.5" font-size="12" text-anchor="middle" fill="#000" font-weight="bold" >дохода</text>
<text x="681" y="428" font-size="12" text-anchor="middle" fill="#000" font-weight="bold" >Сумма</text>
<text x="681" y="442" font-size="12" text-anchor="middle" fill="#000" font-weight="bold" >удержания</text>
<text x="784" y="428" font-size="12" text-anchor="middle" fill="#000" font-weight="bold" >БИК банка</text>
<text x="784" y="442" font-size="12" text-anchor="middle" fill="#000" font-weight="bold" >получателя</text>
<text x="43" y="470.0" font-size="11" text-anchor="middle" fill="#000" >1</text>
<text x="127.7" y="470.0" font-size="11" text-anchor="middle" fill="#000" textLength="121" lengthAdjust="spacingAndGlyphs" >40817810000004000001</text>
<text x="241.5" y="470.0" font-size="11" text-anchor="middle" fill="#000" textLength="45.5" lengthAdjust="spacingAndGlyphs" >52500,00</text>
<text x="394" y="470.0" font-size="11" text-anchor="middle" fill="#000" >Иванов Алексей Сергеевич</text>
<text x="717.5" y="470.0" font-size="11" text-anchor="end" fill="#000" >100,11</text>
<text x="43" y="489.4" font-size="11" text-anchor="middle" fill="#000" >2</text>
<text x="127.7" y="489.4" font-size="11" text-anchor="middle" fill="#000" textLength="121" lengthAdjust="spacingAndGlyphs" >40817810000004000002</text>
<text x="241.5" y="489.4" font-size="11" text-anchor="middle" fill="#000" textLength="45.5" lengthAdjust="spacingAndGlyphs" >48800,50</text>
<text x="394" y="489.4" font-size="11" text-anchor="middle" fill="#000" >Петров Игорь Владимирович</text>
<text x="848.5" y="489.4" font-size="11" text-anchor="end" fill="#000" textLength="54" lengthAdjust="spacingAndGlyphs" >044525225</text>
<text x="43" y="509.4" font-size="11" text-anchor="middle" fill="#000" >3</text>
<text x="127.7" y="509.4" font-size="11" text-anchor="middle" fill="#000" textLength="121" lengthAdjust="spacingAndGlyphs" >40817810000004000003</text>
<text x="241.5" y="509.4" font-size="11" text-anchor="middle" fill="#000" textLength="45.5" lengthAdjust="spacingAndGlyphs" >47010,75</text>
<text x="394" y="509.4" font-size="11" text-anchor="middle" fill="#000" >Сидоров Дмитрий Алексеевич</text>
<text x="43" y="529.4" font-size="11" text-anchor="middle" fill="#000" >4</text>
<text x="127.7" y="529.4" font-size="11" text-anchor="middle" fill="#000" textLength="121" lengthAdjust="spacingAndGlyphs" >40817810000004000004</text>
<text x="241.5" y="529.4" font-size="11" text-anchor="middle" fill="#000" textLength="45.5" lengthAdjust="spacingAndGlyphs" >43000,00</text>
<text x="394" y="529.4" font-size="11" text-anchor="middle" fill="#000" >Кузнецова Ольга Николаевна</text>
<text x="848.5" y="529.4" font-size="11" text-anchor="end" fill="#000" textLength="54" lengthAdjust="spacingAndGlyphs" >044525225</text>
<text x="43" y="549.4" font-size="11" text-anchor="middle" fill="#000" >5</text>
<text x="127.7" y="549.4" font-size="11" text-anchor="middle" fill="#000" textLength="121" lengthAdjust="spacingAndGlyphs" >40817810000004000005</text>
<text x="241.5" y="549.4" font-size="11" text-anchor="middle" fill="#000" textLength="45.5" lengthAdjust="spacingAndGlyphs" >45500,25</text>
<text x="394" y="549.4" font-size="11" text-anchor="middle" fill="#000" >Васильев Максим Петрович</text>
<text x="43" y="569.4" font-size="11" text-anchor="middle" fill="#000" >6</text>
<text x="127.7" y="569.4" font-size="11" text-anchor="middle" fill="#000" textLength="121" lengthAdjust="spacingAndGlyphs" >40817810000004000006</text>
<text x="241.5" y="569.4" font-size="11" text-anchor="middle" fill="#000" textLength="45.5" lengthAdjust="spacingAndGlyphs" >50300,00</text>
<text x="394" y="569.4" font-size="11" text-anchor="middle" fill="#000" >Морозов Владимир Павлович</text>
<text x="848.5" y="569.4" font-size="11" text-anchor="end" fill="#000" textLength="54" lengthAdjust="spacingAndGlyphs" >044525225</text>
<text x="43" y="589.4" font-size="11" text-anchor="middle" fill="#000" >7</text>
<text x="127.7" y="589.4" font-size="11" text-anchor="middle" fill="#000" textLength="121" lengthAdjust="spacingAndGlyphs" >40817810000004000007</text>
<text x="241.5" y="589.4" font-size="11" text-anchor="middle" fill="#000" textLength="45.5" lengthAdjust="spacingAndGlyphs" >45000,99</text>
<text x="394" y="589.4" font-size="11" text-anchor="middle" fill="#000" >Васильева Ольга Николаевна</text>
<text x="43" y="609.4" font-size="11" text-anchor="middle" fill="#000" >8</text>
<text x="127.7" y="609.4" font-size="11" text-anchor="middle" fill="#000" textLength="121" lengthAdjust="spacingAndGlyphs" >40817810000004000008</text>
<text x="241.5" y="609.4" font-size="11" text-anchor="middle" fill="#000" textLength="45.5" lengthAdjust="spacingAndGlyphs" >39999,99</text>
<text x="394" y="609.4" font-size="11" text-anchor="middle" fill="#000" >Новиков Игорь Владимирович</text>
<text x="43" y="629.4" font-size="11" text-anchor="middle" fill="#000" >9</text>
<text x="127.7" y="629.4" font-size="11" text-anchor="middle" fill="#000" textLength="121" lengthAdjust="spacingAndGlyphs" >40817810000004000009</text>
<text x="241.5" y="629.4" font-size="11" text-anchor="middle" fill="#000" textLength="45.5" lengthAdjust="spacingAndGlyphs" >41000,00</text>
<text x="394" y="629.4" font-size="11" text-anchor="middle" fill="#000" >Соловьев Максим Андреевич</text>
<text x="848.5" y="629.4" font-size="11" text-anchor="end" fill="#000" textLength="54" lengthAdjust="spacingAndGlyphs" >044525225</text>
<text x="43" y="649.4" font-size="11" text-anchor="middle" fill="#000" >10</text>
<text x="127.7" y="649.4" font-size="11" text-anchor="middle" fill="#000" textLength="121" lengthAdjust="spacingAndGlyphs" >40817810000004000010</text>
<text x="241.5" y="649.4" font-size="11" text-anchor="middle" fill="#000" textLength="45.5" lengthAdjust="spacingAndGlyphs" >42050,50</text>
<text x="394" y="649.4" font-size="11" text-anchor="middle" fill="#000" >Козлова Татьяна Юрьевна</text>
<text x="43" y="669.4" font-size="11" text-anchor="middle" fill="#000" >11</text>
<text x="127.7" y="669.4" font-size="11" text-anchor="middle" fill="#000" textLength="121" lengthAdjust="spacingAndGlyphs" >40817810000004000011</text>
<text x="241.5" y="669.4" font-size="11" text-anchor="middle" fill="#000" textLength="45.5" lengthAdjust="spacingAndGlyphs" >47100,00</text>
<text x="394" y="669.4" font-size="11" text-anchor="middle" fill="#000" >Фомин Артем Сергеевич</text>
<text x="848.5" y="669.4" font-size="11" text-anchor="end" fill="#000" textLength="54" lengthAdjust="spacingAndGlyphs" >044525225</text>
<text x="43" y="689.4" font-size="11" text-anchor="middle" fill="#000" >12</text>
<text x="127.7" y="689.4" font-size="11" text-anchor="middle" fill="#000" textLength="121" lengthAdjust="spacingAndGlyphs" >40817810000004000012</text>
<text x="241.5" y="689.4" font-size="11" text-anchor="middle" fill="#000" textLength="45.5" lengthAdjust="spacingAndGlyphs" >46770,80</text>
<text x="394" y="689.4" font-size="11" text-anchor="middle" fill="#000" >Горбачева Наталья Петровна</text>
<text x="43" y="709.4" font-size="11" text-anchor="middle" fill="#000" >13</text>
<text x="127.7" y="709.4" font-size="11" text-anchor="middle" fill="#000" textLength="121" lengthAdjust="spacingAndGlyphs" >40817810000004000013</text>
<text x="241.5" y="709.4" font-size="11" text-anchor="middle" fill="#000" textLength="45.5" lengthAdjust="spacingAndGlyphs" >45500,00</text>
<text x="394" y="709.4" font-size="11" text-anchor="middle" fill="#000" >Романов Владислав Ильич</text>
<text x="848.5" y="709.4" font-size="11" text-anchor="end" fill="#000" textLength="54" lengthAdjust="spacingAndGlyphs" >044525225</text>
<text x="43" y="729.4" font-size="11" text-anchor="middle" fill="#000" >14</text>
<text x="127.7" y="729.4" font-size="11" text-anchor="middle" fill="#000" textLength="121" lengthAdjust="spacingAndGlyphs" >40817810000004000014</text>
<text x="241.5" y="729.4" font-size="11" text-anchor="middle" fill="#000" textLength="45.5" lengthAdjust="spacingAndGlyphs" >48500,90</text>
<text x="394" y="729.4" font-size="11" text-anchor="middle" fill="#000" >Шмидт Юлия Александровна</text>
<text x="43" y="749.4" font-size="11" text-anchor="middle" fill="#000" >15</text>
<text x="127.7" y="749.4" font-size="11" text-anchor="middle" fill="#000" textLength="121" lengthAdjust="spacingAndGlyphs" >40817810000004000015</text>
<text x="241.5" y="749.4" font-size="11" text-anchor="middle" fill="#000" textLength="45.5" lengthAdjust="spacingAndGlyphs" >51200,50</text>
<text x="394" y="749.4" font-size="11" text-anchor="middle" fill="#000" >Зайцева Оксана Владимировна</text>
<text x="848.5" y="749.4" font-size="11" text-anchor="end" fill="#000" textLength="54" lengthAdjust="spacingAndGlyphs" >044525225</text>
<text x="43" y="769.4" font-size="11" text-anchor="middle" fill="#000" >16</text>
<text x="127.7" y="769.4" font-size="11" text-anchor="middle" fill="#000" textLength="121" lengthAdjust="spacingAndGlyphs" >40817810000004000016</text>
<text x="241.5" y="769.4" font-size="11" text-anchor="middle" fill="#000" textLength="45.5" lengthAdjust="spacingAndGlyphs" >47250,00</text>
<text x="394" y="769.4" font-size="11" text-anchor="middle" fill="#000" >Чернов Сергей Михайлович</text>
<text x="43" y="789.4" font-size="11" text-anchor="middle" fill="#000" >17</text>
<text x="127.7" y="789.4" font-size="11" text-anchor="middle" fill="#000" textLength="121" lengthAdjust="spacingAndGlyphs" >40817810000004000017</text>
<text x="241.5" y="789.4" font-size="11" text-anchor="middle" fill="#000" textLength="45.5" lengthAdjust="spacingAndGlyphs" >45100,00</text>
<text x="394" y="789.4" font-size="11" text-anchor="middle" fill="#000" >Крылова Елена Сергеевна</text>
<text x="848.5" y="789.4" font-size="11" text-anchor="end" fill="#000" textLength="54" lengthAdjust="spacingAndGlyphs" >044525225</text>
<text x="43" y="809.4" font-size="11" text-anchor="middle" fill="#000" >18</text>
<text x="127.7" y="809.4" font-size="11" text-anchor="middle" fill="#000" textLength="121" lengthAdjust="spacingAndGlyphs" >40817810000004000018</text>
<text x="241.5" y="809.4" font-size="11" text-anchor="middle" fill="#000" textLength="45.5" lengthAdjust="spacingAndGlyphs" >46000,00</text>
<text x="394" y="809.4" font-size="11" text-anchor="middle" fill="#000" >Мельников Виктор Петрович</text>
<text x="43" y="829.4" font-size="11" text-anchor="middle" fill="#000" >19</text>
<text x="127.7" y="829.4" font-size="11" text-anchor="middle" fill="#000" textLength="121" lengthAdjust="spacingAndGlyphs" >40817810000004000019</text>
<text x="241.5" y="829.4" font-size="11" text-anchor="middle" fill="#000" textLength="45.5" lengthAdjust="spacingAndGlyphs" >49500,00</text>
<text x="394" y="829.4" font-size="11" text-anchor="middle" fill="#000" >Коновалов Андрей Юрьевич</text>
<text x="848.5" y="829.4" font-size="11" text-anchor="end" fill="#000" textLength="54" lengthAdjust="spacingAndGlyphs" >044525225</text>
<text x="43" y="849.4" font-size="11" text-anchor="middle" fill="#000" >20</text>
<text x="127.7" y="849.4" font-size="11" text-anchor="middle" fill="#000" textLength="121" lengthAdjust="spacingAndGlyphs" >40817810000004000020</text>
<text x="241.5" y="849.4" font-size="11" text-anchor="middle" fill="#000" textLength="45.5" lengthAdjust="spacingAndGlyphs" >48250,00</text>
<text x="394" y="849.4" font-size="11" text-anchor="middle" fill="#000" >Павлова Анастасия Владимировна</text>
<text x="43" y="869.4" font-size="11" text-anchor="middle" fill="#000" >21</text>
<text x="127.7" y="869.4" font-size="11" text-anchor="middle" fill="#000" textLength="121" lengthAdjust="spacingAndGlyphs" >40817810000004000021</text>
<text x="241.5" y="869.4" font-size="11" text-anchor="middle" fill="#000" textLength="45.5" lengthAdjust="spacingAndGlyphs" >47000,00</text>
<text x="394" y="869.4" font-size="11" text-anchor="middle" fill="#000" >Кириллова Ирина Владимировна</text>
<text x="848.5" y="869.4" font-size="11" text-anchor="end" fill="#000" textLength="54" lengthAdjust="spacingAndGlyphs" >044525225</text>
<text x="43" y="889.4" font-size="11" text-anchor="middle" fill="#000" >22</text>
<text x="127.7" y="889.4" font-size="11" text-anchor="middle" fill="#000" textLength="121" lengthAdjust="spacingAndGlyphs" >40817810000004000022</text>
<text x="241.5" y="889.4" font-size="11" text-anchor="middle" fill="#000" textLength="45.5" lengthAdjust="spacingAndGlyphs" >46000,00</text>
<text x="394" y="889.4" font-size="11" text-anchor="middle" fill="#000" >Тарасов Евгений Алексеевич</text>
<text x="43" y="909.4" font-size="11" text-anchor="middle" fill="#000" >23</text>
<text x="127.7" y="909.4" font-size="11" text-anchor="middle" fill="#000" textLength="121" lengthAdjust="spacingAndGlyphs" >40817810000004000023</text>
<text x="241.5" y="909.4" font-size="11" text-anchor="middle" fill="#000" textLength="45.5" lengthAdjust="spacingAndGlyphs" >51000,00</text>
<text x="394" y="909.4" font-size="11" text-anchor="middle" fill="#000" >Зайцева Оксана Владимировна</text>
<text x="848.5" y="909.4" font-size="11" text-anchor="end" fill="#000" textLength="54" lengthAdjust="spacingAndGlyphs" >044525225</text>
<text x="43" y="929.4" font-size="11" text-anchor="middle" fill="#000" >24</text>
<text x="127.7" y="929.4" font-size="11" text-anchor="middle" fill="#000" textLength="121" lengthAdjust="spacingAndGlyphs" >40817810000004000024</text>
<text x="241.5" y="929.4" font-size="11" text-anchor="middle" fill="#000" textLength="45.5" lengthAdjust="spacingAndGlyphs" >47250,00</text>
<text x="394" y="929.4" font-size="11" text-anchor="middle" fill="#000" >Чернов Сергей Михайлович</text>
<text x="43" y="949.4" font-size="11" text-anchor="middle" fill="#000" >25</text>
<text x="127.7" y="949.4" font-size="11" text-anchor="middle" fill="#000" textLength="121" lengthAdjust="spacingAndGlyphs" >40817810000004000025</text>
<text x="241.5" y="949.4" font-size="11" text-anchor="middle" fill="#000" textLength="45.5" lengthAdjust="spacingAndGlyphs" >45100,00</text>
<text x="394" y="949.4" font-size="11" text-anchor="middle" fill="#000" >Крылова Елена Сергеевна</text>
<text x="848.5" y="949.4" font-size="11" text-anchor="end" fill="#000" textLength="54" lengthAdjust="spacingAndGlyphs" >044525225</text>
<text x="43" y="969.4" font-size="11" text-anchor="middle" fill="#000" >26</text>
<text x="127.7" y="969.4" font-size="11" text-anchor="middle" fill="#000" textLength="121" lengthAdjust="spacingAndGlyphs" >40817810000004000026</text>
<text x="241.5" y="969.4" font-size="11" text-anchor="middle" fill="#000" textLength="45.5" lengthAdjust="spacingAndGlyphs" >48500,00</text>
<text x="394" y="969.4" font-size="11" text-anchor="middle" fill="#000" >Макаров Виктор Иванович</text>
<text x="848.5" y="969.4" font-size="11" text-anchor="end" fill="#000" textLength="54" lengthAdjust="spacingAndGlyphs" >044525225</text>
<text x="43" y="989.4" font-size="11" text-anchor="middle" fill="#000" >27</text>
<text x="127.7" y="989.4" font-size="11" text-anchor="middle" fill="#000" textLength="121" lengthAdjust="spacingAndGlyphs" >40817810000004000027</text>
<text x="241.5" y="989.4" font-size="11" text-anchor="middle" fill="#000" textLength="45.5" lengthAdjust="spacingAndGlyphs" >47100,75</text>
<text x="394" y="989.4" font-size="11" text-anchor="middle" fill="#000" >Лебедева Анна Олеговна</text>
<rect x="27" y="364" width="33" height="2" fill="#217346"/>
<rect x="27" y="385" width="29" height="2" fill="#217346"/>
<rect x="27" y="364" width="2" height="23" fill="#217346"/>
<rect x="58" y="364" width="2" height="17" fill="#217346"/>
<rect x="54" y="381" width="9" height="9" fill="#fff"/>
<rect x="55" y="382" width="7" height="7" fill="#217346"/>
<rect x="926.5" y="284.5" width="161" height="46" fill="#F0F0F0" stroke="#707070" stroke-width="1"/>
<text x="1007.0" y="310" font-size="13.5" text-anchor="middle" fill="#000" textLength="68.5" lengthAdjust="spacingAndGlyphs" >ОБНОВИТЬ</text>
<rect x="929.5" y="345.5" width="166" height="43" fill="#F0F0F0" stroke="#707070" stroke-width="1"/>
<text x="1012.5" y="370" font-size="13.5" text-anchor="middle" fill="#000" textLength="95.5" lengthAdjust="spacingAndGlyphs" >ПЕЧАТЬ РЕЕСТР</text>
</svg>
</div>
<div id="vscroll">
<svg class="chev" style="left:5px;top:5.5px;stroke:#3FA565;" viewBox="0 0 10 6"><path d="M1.8 4.4 L5 1.7 L8.2 4.4"/></svg>
<div class="abs" style="left:6px;top:18px;width:8px;height:15px;border-radius:4px;background:#8A97A8"></div>
<svg class="chev" style="left:5px;top:730px;stroke:#3FA565;" viewBox="0 0 10 6"><path d="M1.8 1.7 L5 4.4 L8.2 1.7"/></svg>
</div>
<div id="side">
<div class="abs" style="left:0px;top:109px;width:36px;height:1px;background:#E4E8ED"></div>
<div class="abs" style="left:0px;top:219px;width:36px;height:1px;background:#E4E8ED"></div>
<div class="abs" style="left:0px;top:349px;width:36px;height:1px;background:#E4E8ED"></div>
<svg class="ico" style="left:6px;top:5px;" viewBox="0 0 24 24"><path d="M6.8 4.2V8.4 M6.8 12V19.6 M12 4.2V13.5 M12 17.1V19.6 M17.3 4.2V8.9 M17.3 12.5V19.6" stroke-width="1.6"/><circle cx="6.8" cy="10.2" r="1.7" stroke-width="1.3"/><circle cx="12" cy="15.3" r="1.7" stroke-width="1.3"/><circle cx="17.3" cy="10.7" r="1.7" stroke-width="1.3"/></svg>
<div class="abs" style="left:12px;top:33.5px;width:0;height:0"><div style="position:absolute;left:0;top:0;transform-origin:0 0;transform:rotate(90deg) translateY(-12.61px);white-space:nowrap;font-size:13.3px;line-height:16px;color:#1f1f1f;letter-spacing:-0.65px">Свойства</div></div>
<svg class="ico" style="left:6px;top:114.80000000000001px;stroke:#6F7E93;" viewBox="0 0 24 24"><rect x="5.1" y="5.3" width="5" height="5" stroke-width="1.5"/><rect x="13.9" y="5.3" width="5" height="5" stroke-width="1.5"/><rect x="5.1" y="13.9" width="5" height="5" stroke-width="1.5"/><rect x="13.9" y="13.9" width="5" height="5" stroke-width="1.5"/></svg>
<div class="abs" style="left:12px;top:143.5px;width:0;height:0"><div style="position:absolute;left:0;top:0;transform-origin:0 0;transform:rotate(90deg) translateY(-12.61px);white-space:nowrap;font-size:13.3px;line-height:16px;color:#7a7a7a;letter-spacing:-0.5px">Сервис</div></div>
<svg class="ico" style="left:6px;top:224.8px;" viewBox="0 0 24 24"><path d="M6.8 4.2V8.4 M6.8 12V19.6 M12 4.2V13.5 M12 17.1V19.6 M17.3 4.2V8.9 M17.3 12.5V14.5" stroke-width="1.6"/><circle cx="6.8" cy="10.2" r="1.7" stroke-width="1.3"/><circle cx="12" cy="15.3" r="1.7" stroke-width="1.3"/><circle cx="17.3" cy="10.7" r="1.7" stroke-width="1.3"/><path d="M15.8 19.8L19.2 15.4L21.3 17.2L18.2 20.6Z" stroke-width="1.3"/></svg>
<div class="abs" style="left:18.299999999999955px;top:253.5px;width:0;height:0"><div style="position:absolute;left:0;top:0;transform-origin:0 0;transform:rotate(90deg) translateY(-12.50px);white-space:nowrap;font-size:13px;line-height:16px;color:#7a7a7a;letter-spacing:-0.3px">Панель</div></div>
<div class="abs" style="left:5.2999999999999545px;top:253.5px;width:0;height:0"><div style="position:absolute;left:0;top:0;transform-origin:0 0;transform:rotate(90deg) translateY(-12.50px);white-space:nowrap;font-size:13px;line-height:16px;color:#7a7a7a;letter-spacing:-0.2px">Пользователя</div></div>
</div>
<div id="tabs">
<svg class="abs" style="left:30px;top:10px" width="12" height="14" viewBox="0 0 12 14"><path d="M8.5 2.5 L4 7 L8.5 11.5" fill="none" stroke="#C2C8D0" stroke-width="1.6"/></svg>
<svg class="abs" style="left:62px;top:10px" width="12" height="14" viewBox="0 0 12 14"><path d="M3.5 2.5 L8 7 L3.5 11.5" fill="none" stroke="#C2C8D0" stroke-width="1.6"/></svg>
<div class="tab" style="left:95.3px;">ПЕРВИЧНЫЕ ДАННЫЕ</div>
<div class="tab" style="left:248.4px;">ЗАЧИСЛЕНИЯ</div>
<div class="tab" style="left:354px;color:#2F9E56;">РЕЕСТР</div>
<div class="tab" style="left:422.3px;">РЕЕСТР (шаблон)</div>
<div class="tab" style="left:546.7px;">Код для СМС</div>
<div class="tab" style="left:649.3px;">Excel mapping</div>
<div class="abs" style="left:343px;top:3px;width:69px;height:2px;background:#2F9E56"></div>
<div class="abs" style="left:765px;top:3px;width:28px;height:28px;border-radius:4px;background:#E2E6EB"></div>
<svg class="abs" style="left:773px;top:11px" width="12" height="12" viewBox="0 0 12 12"><path d="M6 1 V11 M1 6 H11" stroke="#2F9E56" stroke-width="1.8" fill="none"/></svg>
<svg class="abs" style="left:942px;top:12px" width="10" height="12" viewBox="0 0 10 12"><path d="M6.8 2.3 L3.1 6 L6.8 9.7" fill="none" stroke="#3FA565" stroke-width="1.5"/></svg>
<div class="abs" style="left:957px;top:14px;width:45px;height:8px;border-radius:4px;background:#8A97A8"></div>
<svg class="abs" style="left:1858px;top:12px" width="10" height="12" viewBox="0 0 10 12"><path d="M3.2 2.3 L6.9 6 L3.2 9.7" fill="none" stroke="#3FA565" stroke-width="1.5"/></svg>
</div>
<div id="status">
<div class="abs" style="left:1742px;top:11px;width:8px;height:2px;background:#7E8B9B"></div>
<div class="abs" style="left:1759px;top:9px;width:102px;height:6px;border-radius:3px;background:#BFC5CB"></div>
<div class="abs" style="left:1773px;top:5px;width:12px;height:12px;border-radius:7px;background:linear-gradient(#F4F5F7,#DDE0E4);border:1px solid #A3ABB5"></div>
<svg class="abs" style="left:1868px;top:6px" width="12" height="12" viewBox="0 0 12 12"><path d="M6 1.5 V10.5 M1.5 6 H10.5" stroke="#7A838E" stroke-width="1.5" fill="none"/></svg>
<div class="t" style="left:1889px;top:4.02px;font-size:11.5px;line-height:16px;color:#666;letter-spacing:-0.45px;">100%</div>
</div>
</body></html>
